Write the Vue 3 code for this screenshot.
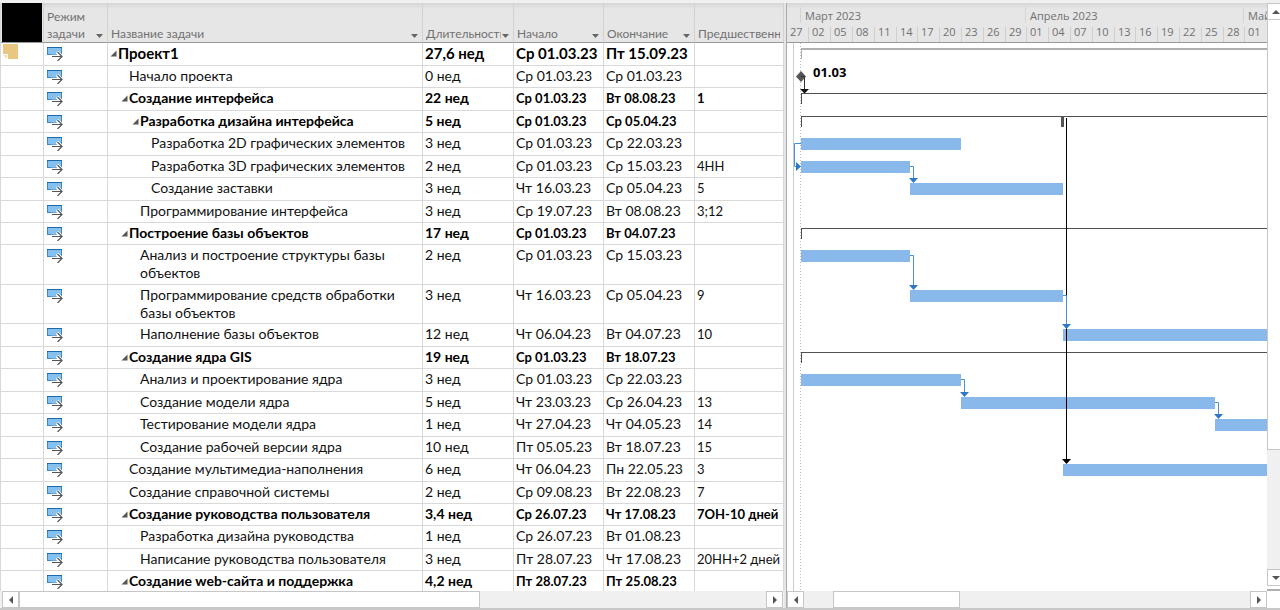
<script setup>
import { computed } from 'vue'

const source = [
  { name: 'Проект1', level: 0, group: true, dur: '27,6 нед', start: 'Ср 01.03.23', end: 'Пт 15.09.23', pred: '', h: 23, span: 'project' },
  { name: 'Начало проекта', level: 1, dur: '0 нед', start: 'Ср 01.03.23', end: 'Ср 01.03.23', pred: '', h: 22 },
  { name: 'Создание интерфейса', level: 1, group: true, dur: '22 нед', start: 'Ср 01.03.23', end: 'Вт 08.08.23', pred: '1', h: 23, span: 'summary' },
  { name: 'Разработка дизайна интерфейса', level: 2, group: true, dur: '5 нед', start: 'Ср 01.03.23', end: 'Ср 05.04.23', pred: '', h: 22, span: 'summary' },
  { name: 'Разработка 2D графических элементов', level: 3, dur: '3 нед', start: 'Ср 01.03.23', end: 'Ср 22.03.23', pred: '', h: 23, bar: [0, 22] },
  { name: 'Разработка 3D графических элементов', level: 3, dur: '2 нед', start: 'Ср 01.03.23', end: 'Ср 15.03.23', pred: '4НН', h: 22, bar: [0, 15] },
  { name: 'Создание заставки', level: 3, dur: '3 нед', start: 'Чт 16.03.23', end: 'Ср 05.04.23', pred: '5', h: 23, bar: [15, 36] },
  { name: 'Программирование интерфейса', level: 2, dur: '3 нед', start: 'Ср 19.07.23', end: 'Вт 08.08.23', pred: '3;12', h: 22 },
  { name: 'Построение базы объектов', level: 1, group: true, dur: '17 нед', start: 'Ср 01.03.23', end: 'Вт 04.07.23', pred: '', h: 22, span: 'summary' },
  { name: 'Анализ и построение структуры базы объектов', level: 2, dur: '2 нед', start: 'Ср 01.03.23', end: 'Ср 15.03.23', pred: '', h: 40, bar: [0, 15] },
  { name: 'Программирование средств обработки базы объектов', level: 2, dur: '3 нед', start: 'Чт 16.03.23', end: 'Ср 05.04.23', pred: '9', h: 39, bar: [15, 36] },
  { name: 'Наполнение базы объектов', level: 2, dur: '12 нед', start: 'Чт 06.04.23', end: 'Вт 04.07.23', pred: '10', h: 23, bar: [36, 126] },
  { name: 'Создание ядра GIS', level: 1, group: true, dur: '19 нед', start: 'Ср 01.03.23', end: 'Вт 18.07.23', pred: '', h: 22, span: 'summary' },
  { name: 'Анализ и проектирование ядра', level: 2, dur: '3 нед', start: 'Ср 01.03.23', end: 'Ср 22.03.23', pred: '', h: 23, bar: [0, 22] },
  { name: 'Создание модели ядра', level: 2, dur: '5 нед', start: 'Чт 23.03.23', end: 'Ср 26.04.23', pred: '13', h: 22, bar: [22, 57] },
  { name: 'Тестирование модели ядра', level: 2, dur: '1 нед', start: 'Чт 27.04.23', end: 'Чт 04.05.23', pred: '14', h: 23, bar: [57, 65] },
  { name: 'Создание рабочей версии ядра', level: 2, dur: '10 нед', start: 'Пт 05.05.23', end: 'Вт 18.07.23', pred: '15', h: 22 },
  { name: 'Создание мультимедиа-наполнения', level: 1, dur: '6 нед', start: 'Чт 06.04.23', end: 'Пн 22.05.23', pred: '3', h: 23, bar: [36, 83] },
  { name: 'Создание справочной системы', level: 1, dur: '2 нед', start: 'Ср 09.08.23', end: 'Вт 22.08.23', pred: '7', h: 22 },
  { name: 'Создание руководства пользователя', level: 1, group: true, dur: '3,4 нед', start: 'Ср 26.07.23', end: 'Чт 17.08.23', pred: '7ОН-10 дней', h: 22 },
  { name: 'Разработка дизайна руководства', level: 2, dur: '1 нед', start: 'Ср 26.07.23', end: 'Вт 01.08.23', pred: '', h: 23 },
  { name: 'Написание руководства пользователя', level: 2, dur: '3 нед', start: 'Пт 28.07.23', end: 'Чт 17.08.23', pred: '20НН+2 дней', h: 22 },
  { name: 'Создание web-сайта и поддержка', level: 1, group: true, dur: '4,2 нед', start: 'Пт 28.07.23', end: 'Пт 25.08.23', pred: '', h: 23 },
]

const columns = [
  { key: 'mode', label: 'Режим задачи', filter: true },
  { key: 'name', label: 'Название задачи', filter: true },
  { key: 'dur', label: 'Длительность', filter: true },
  { key: 'start', label: 'Начало', filter: true },
  { key: 'end', label: 'Окончание', filter: true },
  { key: 'pred', label: 'Предшественники', filter: false },
]

const originX = 14
const dayWidth = 7.27
const dayX = (d) => Math.round(originX + d * dayWidth)

const tasks = computed(() => {
  let top = 0
  return source.map((t) => {
    const row = { ...t, top }
    top += t.h
    return row
  })
})

const days = ['27', '02', '05', '08', '11', '14', '17', '20', '23', '26', '29', '01', '04', '07', '10', '13', '16', '19', '22', '25', '28', '01']
const ticks = days.map((label, i) => ({ label, x: dayX(i * 3 - 2) }))
const months = [
  { label: 'Март 2023', x: dayX(0) },
  { label: 'Апрель 2023', x: dayX(31) },
  { label: 'Май 2023', x: dayX(61) },
]

// Finish-to-start links between rows, as pairs of row indexes
const links = computed(() =>
  [[5, 6], [9, 10], [13, 14], [14, 15], [10, 11]].map(([a, b]) => {
    const from = tasks.value[a]
    const to = tasks.value[b]
    const x = dayX(from.bar[1])
    return { x, y1: from.top + 10, y2: to.top + 5 }
  }),
)
</script>

<template>
  <main class="project">
    <div class="strip"></div>
    <section class="sheet">
      <div class="sheet-view">
        <table>
          <colgroup>
            <col class="c-info" /><col class="c-mode" /><col /><col class="c-dur" /><col class="c-date" /><col class="c-end" /><col class="c-pred" />
          </colgroup>
          <thead>
            <tr>
              <th class="corner" aria-label="Сведения"><div class="corner-fill"></div></th>
              <th v-for="c in columns" :key="c.key" scope="col">
                <div class="head">
                  <span class="head-label">{{ c.label }}</span>
                  <button v-if="c.filter" type="button" class="filter" :aria-label="c.label">
                    <svg width="7" height="4" viewBox="0 0 7 4"><path d="M0 0H7L3.5 4Z" fill="#666" /></svg>
                  </button>
                </div>
              </th>
            </tr>
          </thead>
          <tbody>
            <tr v-for="(t, i) in tasks" :key="i" :class="{ group: t.group, root: t.level === 0 }" :style="{ height: t.h + 'px' }">
              <td class="info">
                <svg v-if="i === 0" width="16" height="16" viewBox="0 0 16 16">
                  <path d="M0 0H15V15H5V10H0Z" fill="#e9c780" />
                  <path d="M0 11L4 11V15Z" fill="#f3dfb3" />
                </svg>
              </td>
              <td class="mode">
                <svg width="17" height="14" viewBox="0 0 17 14">
                  <rect x=".5" y=".5" width="14" height="7" fill="#84c0f0" stroke="#3d87c4" />
                  <path d="M0 .5H15" stroke="#1d68a8" />
                  <path d="M4 9.500H14M10 5L14.500 9.500L10.500 13" fill="none" stroke="#fff" stroke-width="3.500" />
                  <path d="M5 9.500H15M10.500 5L15 9.500L10.500 14" fill="none" stroke="#555" stroke-width="1.200" />
                </svg>
              </td>
              <td>
                <div class="name" :style="{ paddingLeft: t.level * 11 + 'px' }">
                  <span class="toggle-slot">
                    <button v-if="t.group" type="button" class="toggle" :aria-label="'Свернуть ' + t.name">
                      <svg width="7" height="7" viewBox="0 0 7 7"><path d="M6.500 .5V6.500H.5Z" fill="#555" /></svg>
                    </button>
                  </span>
                  <span>{{ t.name }}</span>
                </div>
              </td>
              <td>{{ t.dur }}</td>
              <td class="date">{{ t.start }}</td>
              <td class="date">{{ t.end }}</td>
              <td class="pred">{{ t.pred }}</td>
            </tr>
          </tbody>
        </table>
      </div>
      <div class="hbar">
        <button type="button" class="sb" aria-label="Влево"><svg width="4" height="8" viewBox="0 0 4 8"><path d="M4 0V8L0 4Z" fill="#555" /></svg></button>
        <div class="thumb sheet-thumb"></div>
        <div class="track"></div>
        <button type="button" class="sb" aria-label="Вправо"><svg width="4" height="8" viewBox="0 0 4 8"><path d="M0 0V8L4 4Z" fill="#555" /></svg></button>
      </div>
    </section>
    <div class="splitter"></div>
    <section class="gantt">
      <svg class="scale" role="img" aria-label="Шкала времени">
        <g v-for="m in months" :key="m.label">
          <path :d="`M${m.x - .5} 4V20`" stroke="#d4d4d4" />
          <text :x="m.x + 4" y="17">{{ m.label }}</text>
        </g>
        <g v-for="(d, i) in ticks" :key="i">
          <path v-if="i" :d="`M${d.x + .5} 24V39`" stroke="#cfcfcf" />
          <text :x="d.x + 4" y="33">{{ d.label }}</text>
        </g>
      </svg>
      <svg class="chart" role="img" aria-label="Диаграмма Ганта">
        <path d="M6.500 0V560" stroke="#c3d2c8" />
        <path d="M13.500 0V560" stroke="#c9b8b8" stroke-dasharray="1 2" />
        <g v-for="(t, i) in tasks" :key="i">
          <rect v-if="t.bar" :x="dayX(t.bar[0])" :y="t.top + 5" :width="dayX(t.bar[1]) - dayX(t.bar[0])" height="12" fill="#89b9eb" />
          <g v-if="t.span" :fill="t.span === 'project' ? '#b0b0b0' : '#505050'">
            <rect :x="originX" :y="t.top + 5" width="3000" :height="t.span === 'project' ? 2 : 1" />
            <rect :x="originX" :y="t.top + 5" width="1" height="11" />
          </g>
        </g>
        <rect x="274" y="73" width="3" height="11" fill="#555" />
        <path d="M14 28L19 33.500L14 39L9 33.500Z" fill="#555" />
        <path d="M14 33.500H17.500V47" fill="none" stroke="#333" />
        <path d="M13 46H22L17.500 50.500Z" fill="#111" />
        <text class="milestone" x="26" y="34">01.03</text>
        <path d="M279.500 75V417" stroke="#000" />
        <path d="M275 416H284L279.500 421Z" fill="#000" />
        <g v-for="(l, i) in links" :key="'l' + i">
          <path :d="`M${l.x} ${l.y1 + .5}H${l.x + 3.5}V${l.y2 - 4}`" fill="none" stroke="#4a90d9" />
          <path :d="`M${l.x - 1} ${l.y2 - 5}H${l.x + 8}L${l.x + 3.5} ${l.y2}Z`" fill="#2f78c8" />
        </g>
        <path d="M14 100.500H7.500V123.500H10" fill="none" stroke="#4a90d9" />
        <path d="M9 119V128L14 123.500Z" fill="#2f78c8" />
      </svg>
      <div class="hbar">
        <button type="button" class="sb" aria-label="Влево"><svg width="4" height="8" viewBox="0 0 4 8"><path d="M4 0V8L0 4Z" fill="#555" /></svg></button>
        <div class="track lead"></div>
        <div class="thumb gantt-thumb"></div>
        <div class="track"></div>
        <button type="button" class="sb" aria-label="Вправо"><svg width="4" height="8" viewBox="0 0 4 8"><path d="M0 0V8L4 4Z" fill="#555" /></svg></button>
      </div>
    </section>
    <aside class="vbar">
      <button type="button" class="sb" aria-label="Вверх"><svg width="8" height="4" viewBox="0 0 8 4"><path d="M0 4H8L4 0Z" fill="#555" /></svg></button>
      <div class="vthumb"></div>
      <div class="vtrack"></div>
      <button type="button" class="sb" aria-label="Вниз"><svg width="8" height="4" viewBox="0 0 8 4"><path d="M0 0H8L4 4Z" fill="#555" /></svg></button>
      <div class="vend"></div>
    </aside>
  </main>
</template>

<style>
body {
  margin: 0;
  background: #fff;
}
</style>

<style scoped>
.project {
  display: grid;
  grid-template-columns: minmax(0, 784fr) 3px minmax(0, 480fr) 13px;
  grid-template-rows: 3px minmax(0, 1fr);
  height: 100vh;
  overflow: hidden;
  box-sizing: border-box;
  border-bottom: 2px solid #c8c8c8;
  font-family: Lato, "Noto Sans", sans-serif;
  font-size: 14px;
  color: #111;
}
.strip {
  grid-column: 1 / -1;
  background: #f1f0ee;
}
.sheet,
.gantt {
  display: flex;
  flex-direction: column;
  min-height: 0;
}
.sheet-view {
  flex: 1;
  min-height: 0;
  overflow: hidden;
}
table {
  width: 100%;
  table-layout: fixed;
  border-collapse: separate;
  border-spacing: 0;
  border-left: 1px solid #d8d8d8;
  box-sizing: border-box;
}
.c-info { width: 43px; }
.c-mode { width: 64px; }
.c-dur { width: 91px; }
.c-date { width: 90px; }
.c-end { width: 91px; }
.c-pred { width: 89px; }
th {
  height: 40px;
  box-sizing: border-box;
  padding: 0;
  vertical-align: bottom;
  text-align: left;
  font-weight: 400;
  color: #717171;
  background: linear-gradient(#d6d6d6, #e6e6e6 6px);
  border-right: 1px solid #d2d2d2;
  border-bottom: 1px solid #999;
}
.corner-fill {
  height: 39px;
  margin: 0 1px;
  background: #000;
}
.head {
  display: flex;
  align-items: flex-end;
  padding: 0 3px;
  font-size: 12px;
  line-height: 17px;
}
.head-label {
  flex: 1;
  min-width: 0;
  overflow: hidden;
}
.filter,
.toggle,
.sb {
  display: flex;
  align-items: center;
  justify-content: center;
  padding: 0;
  border: 0;
  background: none;
}
.filter {
  width: 9px;
  height: 13px;
}
td {
  box-sizing: border-box;
  height: inherit;
  padding: 1px 0 0 2px;
  vertical-align: top;
  line-height: 18px;
  white-space: nowrap;
  border-right: 1px solid #d9d9d9;
  border-bottom: 1px solid #d9d9d9;
}
.group td {
  font-weight: 700;
  color: #000;
}
.root td {
  font-size: 15px;
}
.pred,
.group:not(.root) .date {
  font-size: 13px;
}
td svg {
  display: block;
}
td.info {
  padding: 1px 0 0 2px;
}
td.mode {
  padding: 4px 0 0 3px;
}
.name {
  display: flex;
  white-space: normal;
}
.toggle-slot {
  flex: 0 0 8px;
}
.toggle {
  width: 7px;
  height: 18px;
}
.splitter {
  background: #e6e6e6;
  border-right: 1px solid #aaa;
  box-sizing: border-box;
}
.scale {
  display: block;
  flex: 0 0 39px;
  width: 100%;
  background: linear-gradient(#d6d6d6, #e6e6e6 6px);
  border-bottom: 1px solid #999;
}
.scale text {
  font-family: "Open Sans", sans-serif;
  font-size: 11px;
  fill: #707070;
}
.chart {
  display: block;
  flex: 1;
  min-height: 0;
  width: 100%;
  overflow: hidden;
}
.milestone {
  font: 700 13px "Open Sans", sans-serif;
  fill: #000;
}
.hbar {
  display: flex;
  flex: 0 0 17px;
  height: 17px;
  background: #f0f0f0;
}
.sheet .hbar {
  padding: 0 1px 0 2px;
}
.hbar .sb,
.thumb {
  box-sizing: border-box;
  background: #fff;
  border: 1px solid #c6c6c6;
}
.hbar .sb {
  flex: 0 0 17px;
}
.sheet-thumb {
  flex: 0 0 59%;
}
.track {
  flex: 1;
}
.lead {
  flex: 0 0 6%;
}
.gantt-thumb {
  flex: 0 0 127px;
}
.vbar {
  display: flex;
  flex-direction: column;
  overflow: hidden;
}
.vbar .sb {
  flex: 0 0 17px;
  width: 17px;
  box-sizing: border-box;
  background: #fff;
  border: 1px solid #c6c6c6;
}
.vthumb {
  flex: 430;
  border-left: 1px solid #c6c6c6;
  border-bottom: 1px solid #c6c6c6;
}
.vtrack {
  flex: 119;
  background: #f0f0f0;
}
.vend {
  flex: 0 0 17px;
  margin-top: 3px;
  border-top: 2px solid #b0b0b0;
}
</style>
